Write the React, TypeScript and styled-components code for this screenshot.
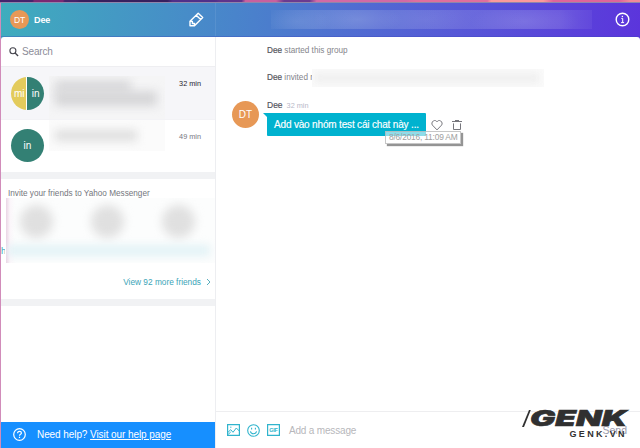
import React from "react";
import styled, { createGlobalStyle } from "styled-components";

const Global = createGlobalStyle`
  * { box-sizing: border-box; }
  body { margin: 0; background: #fff; font-family: "Liberation Sans", Arial, sans-serif; overflow: hidden; }
  svg { display: block; flex: none; }
`;

const Desktop = styled.div`
  width: 640px;
  height: 448px;
  display: grid;
  grid-template-rows: 3px 1fr;
  background: #fff;
`;

const Wallpaper = styled.div`
  border-bottom: 1px solid #8f86ab;
  background: linear-gradient(100deg, #45246c 0 32px, #7b2873 34px 62px, #45246c 64px 75px, #37205f 80px 165px,
    #50308a 170px 212px, #5f348c 216px 238px, #c9609e 242px 272px, #6b3b90 280px 305px, #d26aa5 312px 400px,
    #e06f9d 410px 480px, #fb9a9b 484px 535px, #df659a 545px 610px, #f18998 620px);
`;

const Windows = styled.div`
  min-height: 0;
  display: grid;
  grid-template-columns: 1px 1fr;
  background: #d18cba;
`;

const Messenger = styled.div`
  grid-column: 2;
  min-height: 0;
  display: grid;
  grid-template-rows: 34px 1fr;
  background: linear-gradient(97deg, #3fadbd 0%, #4984cb 34%, #5658d7 66%, #5d2bdd 100%);
`;

const Header = styled.header`
  display: grid;
  grid-template-columns: 215px 1fr;
  border-bottom: 1px solid rgba(60, 70, 190, 0.35);
`;

const Account = styled.div`
  display: flex;
  align-items: center;
  padding: 0 11px 0 9px;
  border-right: 1px solid rgba(255, 255, 255, 0.08);
  color: #fff;
  font-size: 9px;
  letter-spacing: -0.1px;
  font-weight: bold;
  svg { margin-left: auto; }
`;

const Avatar = styled.div<{ $size: number; $font: number; $fill: string }>`
  flex: none;
  display: flex;
  align-items: center;
  justify-content: center;
  width: ${(p) => p.$size}px;
  height: ${(p) => p.$size}px;
  border-radius: 50%;
  background: ${(p) => p.$fill};
  color: #fff;
  font-size: ${(p) => p.$font}px;
  font-weight: normal;
  span { flex: 1; text-align: center; }
`;

const AccountName = styled.span`
  margin-left: 5px;
`;

const TopicBar = styled.div`
  display: flex;
  align-items: center;
  justify-content: space-between;
  padding: 0 10px 0 55px;
`;

const Topic = styled.div`
  width: 321px;
  height: 19px;
  margin-top: -1px;
  background: radial-gradient(ellipse 45px 14px at 27% 50%, rgba(255,255,255,.1), transparent),
    radial-gradient(ellipse 35px 14px at 8% 60%, rgba(255,255,255,.08), transparent),
    radial-gradient(ellipse 50px 14px at 48% 50%, rgba(255,255,255,.05), transparent),
    radial-gradient(ellipse 55px 16px at 79% 60%, rgba(255,255,255,.1), transparent),
    linear-gradient(90deg, rgba(255,255,255,.02), rgba(255,255,255,.12) 15% 90%, rgba(255,255,255,.05));
`;

const Content = styled.div`
  min-height: 0;
  display: grid;
  grid-template-columns: 215px 1fr;
  background: #fff;
  border-radius: 3px 3px 0 0;
  overflow: hidden;
`;

const Sidebar = styled.aside`
  min-height: 0;
  display: flex;
  flex-direction: column;
  border-right: 1px solid #edeef1;
`;

const Search = styled.label`
  flex: none;
  height: 29px;
  display: flex;
  align-items: center;
  gap: 3px;
  padding: 0 8px;
  color: #8c8c98;
  font-size: 10px;
  letter-spacing: -0.15px;
`;

const Conversation = styled.div<{ $active?: boolean }>`
  flex: none;
  display: flex;
  align-items: flex-start;
  height: 53px;
  padding: ${(p) => (p.$active ? 10 : 9)}px 14px 0 10px;
  background: ${(p) => (p.$active ? "#f6f6f9" : "#fff")};
  border-top: 1px solid ${(p) => (p.$active ? "#eeeef1" : "#f3f3f6")};
`;

const Preview = styled.div<{ $tall?: boolean }>`
  width: 116px;
  height: ${(p) => (p.$tall ? 43 : 31)}px;
  margin: ${(p) => (p.$tall ? "-1px" : "-9px")} 0 0 5px;
  background: ${(p) => (p.$tall ? "#f5f5f6" : "#fbfbfb")};
  overflow: hidden;
`;

const Smudge = styled.div<{ $w: number; $h: number; $top: number; $tone: string }>`
  width: ${(p) => p.$w}px;
  height: ${(p) => p.$h}px;
  margin: ${(p) => p.$top}px 0 0 6px;
  background: ${(p) => p.$tone};
  filter: blur(5px);
`;

const Time = styled.time<{ $strong?: boolean }>`
  margin-left: auto;
  white-space: nowrap;
  font-size: 7.3px;
  line-height: ${(p) => (p.$strong ? 14 : 16)}px;
  color: ${(p) => (p.$strong ? "#24242d" : "#77777f")};
`;

const Gap = styled.div`
  flex: none;
  height: 7px;
  background: #f1f2f4;
`;

const Invite = styled.section`
  flex: none;
  height: 120px;
  display: flex;
  flex-direction: column;
  padding-top: 10px;
`;

const InviteTitle = styled.h2`
  margin: 0;
  height: 9px;
  padding-left: 7px;
  overflow: hidden;
  color: #74767d;
  font-size: 8.2px;
  font-weight: normal;
  line-height: 10px;
  white-space: nowrap;
`;

const Friends = styled.div`
  height: 65px;
  display: grid;
  grid-template-columns: 5px 1fr;
  align-items: stretch;
`;

const CutName = styled.span`
  width: 4px;
  overflow: hidden;
  padding: 48px 0 0 0;
  color: #3ca9bd;
  font-size: 9px;
  line-height: 10px;
`;

const FriendBlur = styled.div`
  overflow: hidden;
  padding-top: 4px;
  background: linear-gradient(90deg, #ead5e5 0, #fbf6fa 4px, transparent 9px), #fcfdfd;
`;

const Faces = styled.div`
  display: flex;
  gap: 38px;
  padding: 3px 0 0 14px;
  i {
    width: 33px;
    height: 33px;
    border-radius: 50%;
    background: #e0e0e0;
    filter: blur(5px);
  }
`;

const Names = styled.div`
  width: 203px;
  height: 11px;
  margin: 7px 0 0 1px;
  background: #e2f2f6;
  filter: blur(4px);
`;

const More = styled.a`
  display: flex;
  align-items: center;
  justify-content: flex-end;
  gap: 5px;
  padding: 13px 4px 0 0;
  color: #3aa4b7;
  font-size: 8.3px;
  line-height: 12px;
`;

const Help = styled.footer`
  flex: none;
  height: 26px;
  margin-top: auto;
  display: flex;
  align-items: center;
  gap: 11px;
  padding: 0 0 1px 12px;
  background: #168fff;
  color: #fff;
  font-size: 10px;
  letter-spacing: -0.08px;
  white-space: nowrap;
`;

const Chat = styled.main`
  min-height: 0;
  display: grid;
  grid-template-rows: 1fr 37px;
`;

const History = styled.div`
  padding: 8px 16px 0;
  min-height: 0;
`;

const Notice = styled.div`
  display: flex;
  align-items: center;
  height: 12px;
  margin: 0 0 15px 35px;
  color: #85858b;
  font-size: 8.2px;
  line-height: 12px;
  white-space: pre;
  b { color: #55555d; font-weight: normal; -webkit-text-stroke: 0.2px #55555d; }
`;

const Redacted = styled.div`
  width: 232px;
  height: 18px;
  margin-left: -1px;
  background: #fafafa;
  overflow: hidden;
  &::before {
    content: "";
    display: block;
    width: 224px;
    height: 10px;
    margin: 4px 0 0 3px;
    background: #f0f0f0;
    filter: blur(3px);
  }
`;

const Message = styled.div`
  display: grid;
  grid-template-columns: 27px 1fr;
  column-gap: 8px;
  margin-top: 15px;
`;

const AvatarSlot = styled.div`
  padding-top: 2px;
`;

const Byline = styled.div`
  height: 14px;
  line-height: 13px;
  font-size: 8.5px;
  color: #50505a;
  -webkit-text-stroke: 0.15px #50505a;
  time { margin-left: 4px; font-size: 7.3px; color: #b8b8c8; -webkit-text-stroke: 0; }
`;

const BubbleLine = styled.div`
  display: flex;
  align-items: center;
  position: relative;
`;

const Bubble = styled.div`
  position: relative;
  width: 159px;
  height: 23px;
  padding-left: 7px;
  border-radius: 1px;
  background: #00b2cf;
  color: #fff;
  font-size: 10px;
  letter-spacing: -0.17px;
  line-height: 23px;
  white-space: nowrap;
  -webkit-text-stroke: 0.15px #fff;
  &::before {
    content: "";
    position: absolute;
    left: -4px;
    top: 0;
    border-top: 5px solid #00b2cf;
    border-left: 5px solid transparent;
  }
`;

const Actions = styled.div`
  display: flex;
  gap: 8px;
  margin-left: 5px;
`;

const Tooltip = styled.div`
  position: absolute;
  left: 118px;
  top: 18px;
  width: 76px;
  height: 13px;
  padding-left: 3px;
  border: 1px solid rgba(180, 180, 180, 0.75);
  background: rgba(255, 255, 255, 0.56);
  box-shadow: 2px 2px 1px rgba(90, 90, 90, 0.65);
  color: #a0a0a0;
  font-size: 8.4px;
  letter-spacing: -0.2px;
  line-height: 11px;
  white-space: nowrap;
`;

const Composer = styled.div`
  position: relative;
  display: flex;
  align-items: center;
  gap: 7px;
  padding: 0 13px 0 11px;
  border-top: 1px solid #eeeef0;
  color: #b7b7bb;
  font-size: 10px;
  letter-spacing: -0.18px;
`;

const Placeholder = styled.span`
  margin-left: 2px;
`;

const Send = styled.span`
  margin-left: auto;
  color: #9b9bad;
  font-size: 10.5px;
  letter-spacing: 0;
`;

const Watermark = styled.svg`
  position: absolute;
  right: 8px;
  top: -8px;
  letter-spacing: 0;
  overflow: visible;
`;

const Pencil = () => (
  <svg width="15" height="15" viewBox="0 0 15 15" fill="none" stroke="#fff" strokeWidth="1.4">
    <path d="M1 9.2 9.2 1.2 13.7 5.5 5.5 13.8H1ZM7.2 3.2 11.7 7.5M1.2 9.4h2.2v2.1h2.1v2.2" strokeLinejoin="round" />
  </svg>
);
const Info = () => (
  <svg width="15" height="15" viewBox="0 0 15 15" fill="none" stroke="#fff">
    <circle cx="7.5" cy="7.5" r="6.3" strokeWidth="1.4" />
    <path d="M6.3 6.4h1.4v4.1M6.1 10.6h3" strokeWidth="1" />
    <path d="M7.4 3.8v1.3" strokeWidth="1.3" />
  </svg>
);
const Magnifier = () => (
  <svg width="10" height="10" viewBox="0 0 10 10" fill="none" stroke="#44444d">
    <circle cx="3.9" cy="3.8" r="3" strokeWidth="1.1" />
    <path d="m6.1 6 3 3" strokeWidth="1.3" />
  </svg>
);
const Chevron = () => (
  <svg width="5" height="8" viewBox="0 0 5 8" fill="none" stroke="#5aaebd">
    <path d="m1 1 3 3-3 3" />
  </svg>
);
const Question = () => (
  <svg width="13" height="13" viewBox="0 0 13 13" fill="none" stroke="#fff">
    <circle cx="6.5" cy="6.5" r="5.8" strokeWidth="1.2" />
    <path d="M4.6 5.2c0-2.6 3.8-2.4 3.8-.2 0 1.4-1.9 1.3-1.9 2.8M6.5 8.8v1.1" strokeWidth="1.2" />
  </svg>
);
const Heart = () => (
  <svg width="12" height="12" viewBox="0 0 12 12" fill="none" stroke="#77777d">
    <path d="M6 10.9 1.4 6.1C-.6 3.4 3.6-.6 6 2.8 8.4-.6 12.6 3.4 10.6 6.1Z" strokeLinejoin="round" />
  </svg>
);
const Trash = () => (
  <svg width="12" height="12" viewBox="0 0 12 12" fill="none" stroke="#77777d">
    <path d="M1 2.5h10M4 1.5h4M2.5 4.4v6.1h7V4.4" />
  </svg>
);
const Photo = () => (
  <svg width="13" height="12" viewBox="0 0 13 12" fill="none" stroke="#30b4cd">
    <path d="M.6.6h11.8v10.8H.6Z" strokeWidth="1.2" />
    <path d="m1 8.3 2.7-2.6 2.3 2.6L9.3 4l3 3M1.2 10.3l2.5-2.2" />
    <path d="M3.2 3.2h1.2" />
  </svg>
);
const Smile = () => (
  <svg width="13" height="13" viewBox="0 0 13 13" fill="none" stroke="#30b4cd">
    <circle cx="6.5" cy="6.5" r="5.8" strokeWidth="1.1" />
    <path d="M3.4 7.3c.8 3.2 5.4 3.2 6.2 0M4.6 3.8v1.7M8.4 3.8v1.7" strokeWidth="1.1" />
  </svg>
);
const Gif = () => (
  <svg width="13" height="12" viewBox="0 0 13 12">
    <path d="M.6.6h11.8v10.8H.6Z" fill="none" stroke="#30b4cd" strokeWidth="1.2" />
    <text x="2.2" y="8" fontSize="5.5" fontWeight="bold" textLength="8.6" lengthAdjust="spacingAndGlyphs" fill="#30b4cd">GIF</text>
  </svg>
);

export default function App() {
  return (
    <Desktop>
      <Global />
      <Wallpaper />
      <Windows>
        <Messenger>
          <Header>
            <Account>
              <Avatar $size={19} $font={8.5} $fill="#e79856">DT</Avatar>
              <AccountName>Dee</AccountName>
              <Pencil />
            </Account>
            <TopicBar>
              <Topic />
              <Info />
            </TopicBar>
          </Header>
          <Content>
            <Sidebar>
              <Search><Magnifier />Search</Search>
              <Conversation $active>
                <Avatar $size={33} $font={10} $fill="linear-gradient(90deg, #e3cb5c 0 15px, #fff 15px 16px, #338074 16px)">
                  <span>mi</span><span>in</span>
                </Avatar>
                <Preview $tall>
                  <Smudge $w={76} $h={14} $top={4} $tone="#dadadc" />
                  <Smudge $w={102} $h={15} $top={-3} $tone="#d6d6d8" />
                </Preview>
                <Time $strong>32 min</Time>
              </Conversation>
              <Conversation>
                <Avatar $size={33} $font={10} $fill="#338074">in</Avatar>
                <Preview>
                  <Smudge $w={82} $h={11} $top={10} $tone="#dedede" />
                </Preview>
                <Time>49 min</Time>
              </Conversation>
              <Gap />
              <Invite>
                <InviteTitle>Invite your friends to Yahoo Messenger</InviteTitle>
                <Friends>
                  <CutName>h</CutName>
                  <FriendBlur>
                    <Faces><i /><i /><i /></Faces>
                    <Names />
                  </FriendBlur>
                </Friends>
                <More>View 92 more friends <Chevron /></More>
              </Invite>
              <Gap />
              <Help>
                <Question />
                <span>Need help? <u>Visit our help page</u></span>
              </Help>
            </Sidebar>
            <Chat>
              <History>
                <Notice><b>Dee</b> started this group</Notice>
                <Notice><b>Dee</b> invited r<Redacted /></Notice>
                <Message>
                  <AvatarSlot><Avatar $size={27} $font={10} $fill="#e79856">DT</Avatar></AvatarSlot>
                  <div>
                    <Byline>Dee<time>32 min</time></Byline>
                    <BubbleLine>
                      <Bubble>Add vào nhóm test cái chat này ...</Bubble>
                      <Actions><Heart /><Trash /></Actions>
                      <Tooltip>8/6/2016, 11:09 AM</Tooltip>
                    </BubbleLine>
                  </div>
                </Message>
              </History>
              <Composer>
                <Photo />
                <Smile />
                <Gif />
                <Placeholder>Add a message</Placeholder>
                <Send>Send</Send>
                <Watermark width="110" height="39" viewBox="0 -3 110 39" fill="#303030">
                  <path d="M0 20 7 3h1.8L2 20Z" />
                  <text x="8" y="18.5" fontFamily="Inter" fontSize="21.5" fontWeight="900" fontStyle="italic" textLength="97" lengthAdjust="spacingAndGlyphs" stroke="#303030" strokeWidth=".6">GENK</text>
                  <text x="47.5" y="30" fontFamily="Liberation Sans" fontSize="9" fontWeight="bold" textLength="55">GENK.VN</text>
                </Watermark>
              </Composer>
            </Chat>
          </Content>
        </Messenger>
      </Windows>
    </Desktop>
  );
}
